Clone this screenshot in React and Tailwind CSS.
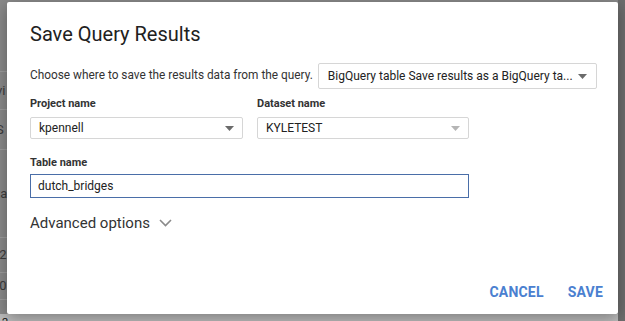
import { useState } from 'react';

function Caret({ light }) {
    return (
        <svg width="9" height="5" viewBox="0 0 9 5" className="shrink-0">
            <path d="M0 0 L9 0 L4.5 5 Z" fill={light ? '#b5b5b5' : '#6b6b6b'} />
        </svg>
    );
}

function Select({ value, light, className }) {
    return (
        <div
            className={`flex items-center justify-between bg-white border border-[#d6d6d6] rounded-[2px] pl-[8px] pr-[8px] text-[12px] text-[#222] whitespace-nowrap ${className}`}
        >
            <span>{value}</span>
            <Caret light={light} />
        </div>
    );
}

// rows of the results table behind the dimmed backdrop
const bgRows = [
    { h: 'h-[72px]', t: '' },
    { h: 'h-[38px]', t: 'vi' },
    { h: 'h-[40px]', t: 'S' },
    { h: 'h-[88px]', t: 'ta' },
    { h: 'h-[35px]', t: ':2' },
    { h: 'h-[27px]', t: ':0' },
];

export default function App() {
    const [tableName, setTableName] = useState('dutch_bridges');

    return (
        <div className="relative w-[625px] h-[321px] overflow-hidden bg-[#8a8a8a] font-['Roboto',sans-serif]">
            {/* Backdrop table, dimmed */}
            <div className="flex flex-col">
                {bgRows.map((r, i) => (
                    <div
                        key={i}
                        className={`${r.h} flex items-center border-b border-[#9d9d9d] text-[13px] text-[#3c3c3c] -ml-[4px] shrink-0`}
                    >
                        {r.t}
                    </div>
                ))}
                <div className="h-[14px] shrink-0"></div>
                <div className="h-[11px] bg-[#bdbdbd] text-[11px] leading-[12px] text-[#111] whitespace-nowrap shrink-0 pl-[2px] pt-[3px]">
                    2 —— ——— ———————— ——————— ————————— ——————— ——————————
                </div>
            </div>
            <div className="absolute right-0 top-0 bottom-0 w-[7px] bg-[#6e6e6e]"></div>

            {/* Dialog */}
            <div className="absolute left-[7px] top-[2px] w-[611px] h-[312px] bg-white rounded-[2px] shadow-[0_4px_16px_rgba(0,0,0,0.35)] flex flex-col pl-[23px] pr-[15px] pt-[20px] pb-[11px]">
                <h1 className="text-[20px] leading-[24px] text-[#212121] font-normal">Save Query Results</h1>

                <div className="flex items-center gap-[5px] mt-[17px]">
                    <span className="text-[11.85px] text-[#333] whitespace-nowrap">
                        Choose where to save the results data from the query.
                    </span>
                    <Select
                        value="BigQuery table Save results as a BigQuery ta..."
                        className="w-[279px] h-[26px] pl-[9px] pr-[9px]"
                    />
                </div>

                <div className="flex gap-[14px] mt-[8px]">
                    <div className="flex flex-col">
                        <label className="text-[11px] leading-[14px] font-bold text-[#333]">Project name</label>
                        <Select value="kpennell" className="w-[213px] h-[22px] mt-[6px]" />
                    </div>
                    <div className="flex flex-col">
                        <label className="text-[11px] leading-[14px] font-bold text-[#333]">Dataset name</label>
                        <Select value="KYLETEST" light className="w-[212px] h-[22px] mt-[6px] pl-[7px]" />
                    </div>
                </div>

                <label className="text-[11px] leading-[14px] font-bold text-[#333] mt-[17px]">Table name</label>
                <input
                    value={tableName}
                    onChange={(e) => setTableName(e.target.value)}
                    className="w-[439px] h-[24px] mt-[4px] border border-[#4a6ea8] px-[7px] text-[12px] text-[#222] outline-none"
                />

                <div className="flex items-center gap-[9px] mt-[15px] h-[20px]">
                    <span className="text-[15px] text-[#333]">Advanced options</span>
                    <svg width="13" height="8" viewBox="0 0 13 8">
                        <path d="M1 1 L6.5 6.5 L12 1" fill="none" stroke="#8a8a8a" strokeWidth="1.6" />
                    </svg>
                </div>

                <div className="flex justify-end items-center gap-[24px] mt-auto">
                    <button className="text-[14px] font-bold text-[#4a80d0] tracking-[0.2px]">CANCEL</button>
                    <button className="text-[14px] font-bold text-[#4a80d0] tracking-[0.2px]">SAVE</button>
                </div>
            </div>
        </div>
    );
}
